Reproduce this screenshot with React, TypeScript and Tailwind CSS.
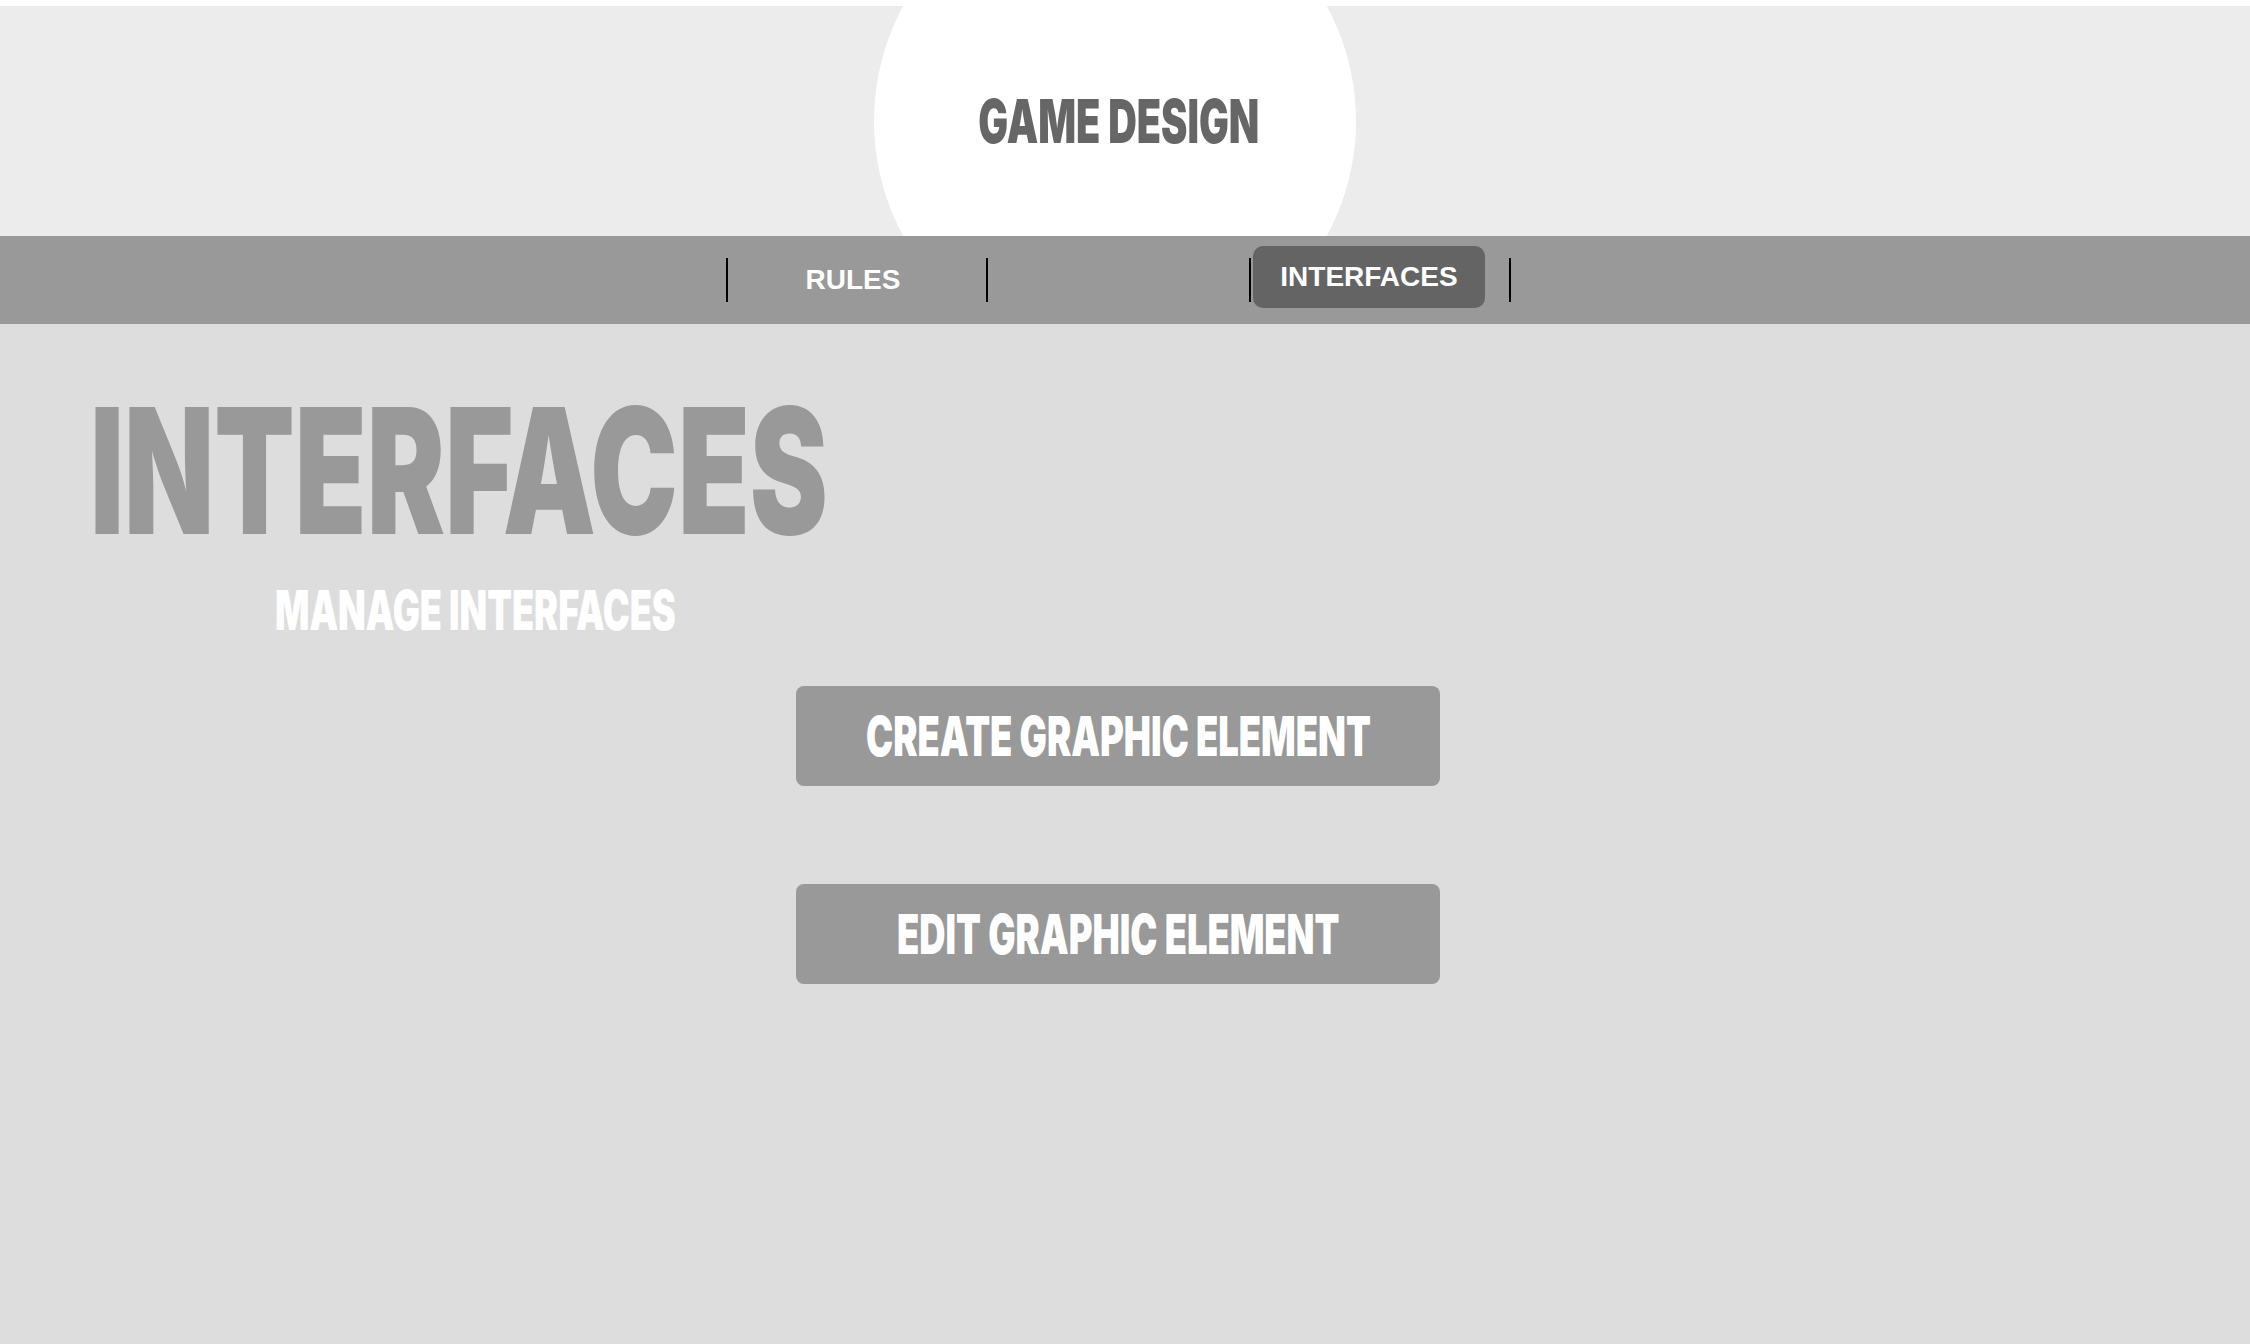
import React from 'react';

interface CondensedProps {
  children: React.ReactNode;
  className?: string;
}

// Impact-like heading: Inter Black squeezed horizontally
function Condensed({ children, className = '' }: CondensedProps) {
  return (
    <span
      className={`inline-block whitespace-nowrap font-['Inter','Liberation_Sans',sans-serif] font-black leading-none ${className}`}
    >
      {children}
    </span>
  );
}

function Separator() {
  return <div className="w-[2px] h-[44px] bg-black shrink-0" />;
}

export default function App() {
  return (
    <div className="min-h-[1344px] flex flex-col bg-white pt-[6px] font-['Liberation_Sans',Arial,sans-serif]">
      <header className="h-[230px] bg-[#ececec] overflow-hidden flex items-center justify-center pr-[20px]">
        <div className="w-[482px] h-[482px] shrink-0 rounded-full bg-white flex items-center justify-center pl-[7px]">
          <Condensed className="text-[60px] text-[#666666] scale-x-[0.66]">GAME DESIGN</Condensed>
        </div>
      </header>

      <nav className="h-[88px] bg-[#999999] flex items-center justify-center pr-[13px]">
        <Separator />
        <div className="w-[258px] flex justify-center pr-[8px]">
          <span className="text-[28px] font-bold leading-none text-white">RULES</span>
        </div>
        <Separator />
        <div className="w-[261px]" />
        <Separator />
        <div className="w-[258px] flex">
          <button className="ml-[2px] mb-[6px] w-[232px] h-[62px] rounded-[10px] bg-[#646464] text-white text-[28px] font-bold leading-none">
            INTERFACES
          </button>
        </div>
        <Separator />
      </nav>

      <main className="flex-1 bg-[#dddddd] flex flex-col">
        <div className="pt-[59px] pl-[90px]">
          <Condensed className="text-[175px] text-[#999999] origin-left scale-x-[0.67]">INTERFACES</Condensed>
        </div>
        <div className="pt-[25px] pl-[275px]">
          <Condensed className="text-[55px] text-white origin-left scale-x-[0.655]">MANAGE INTERFACES</Condensed>
        </div>
        <div className="pt-[48px] flex flex-col items-center gap-[98px] pr-[14px]">
          <button className="w-[644px] h-[100px] rounded-[8px] bg-[#999999] flex items-center justify-center">
            <Condensed className="text-[55px] text-white scale-x-[0.66]">CREATE GRAPHIC ELEMENT</Condensed>
          </button>
          <button className="w-[644px] h-[100px] rounded-[8px] bg-[#999999] flex items-center justify-center">
            <Condensed className="text-[55px] text-white scale-x-[0.66]">EDIT GRAPHIC ELEMENT</Condensed>
          </button>
        </div>
      </main>
    </div>
  );
}
